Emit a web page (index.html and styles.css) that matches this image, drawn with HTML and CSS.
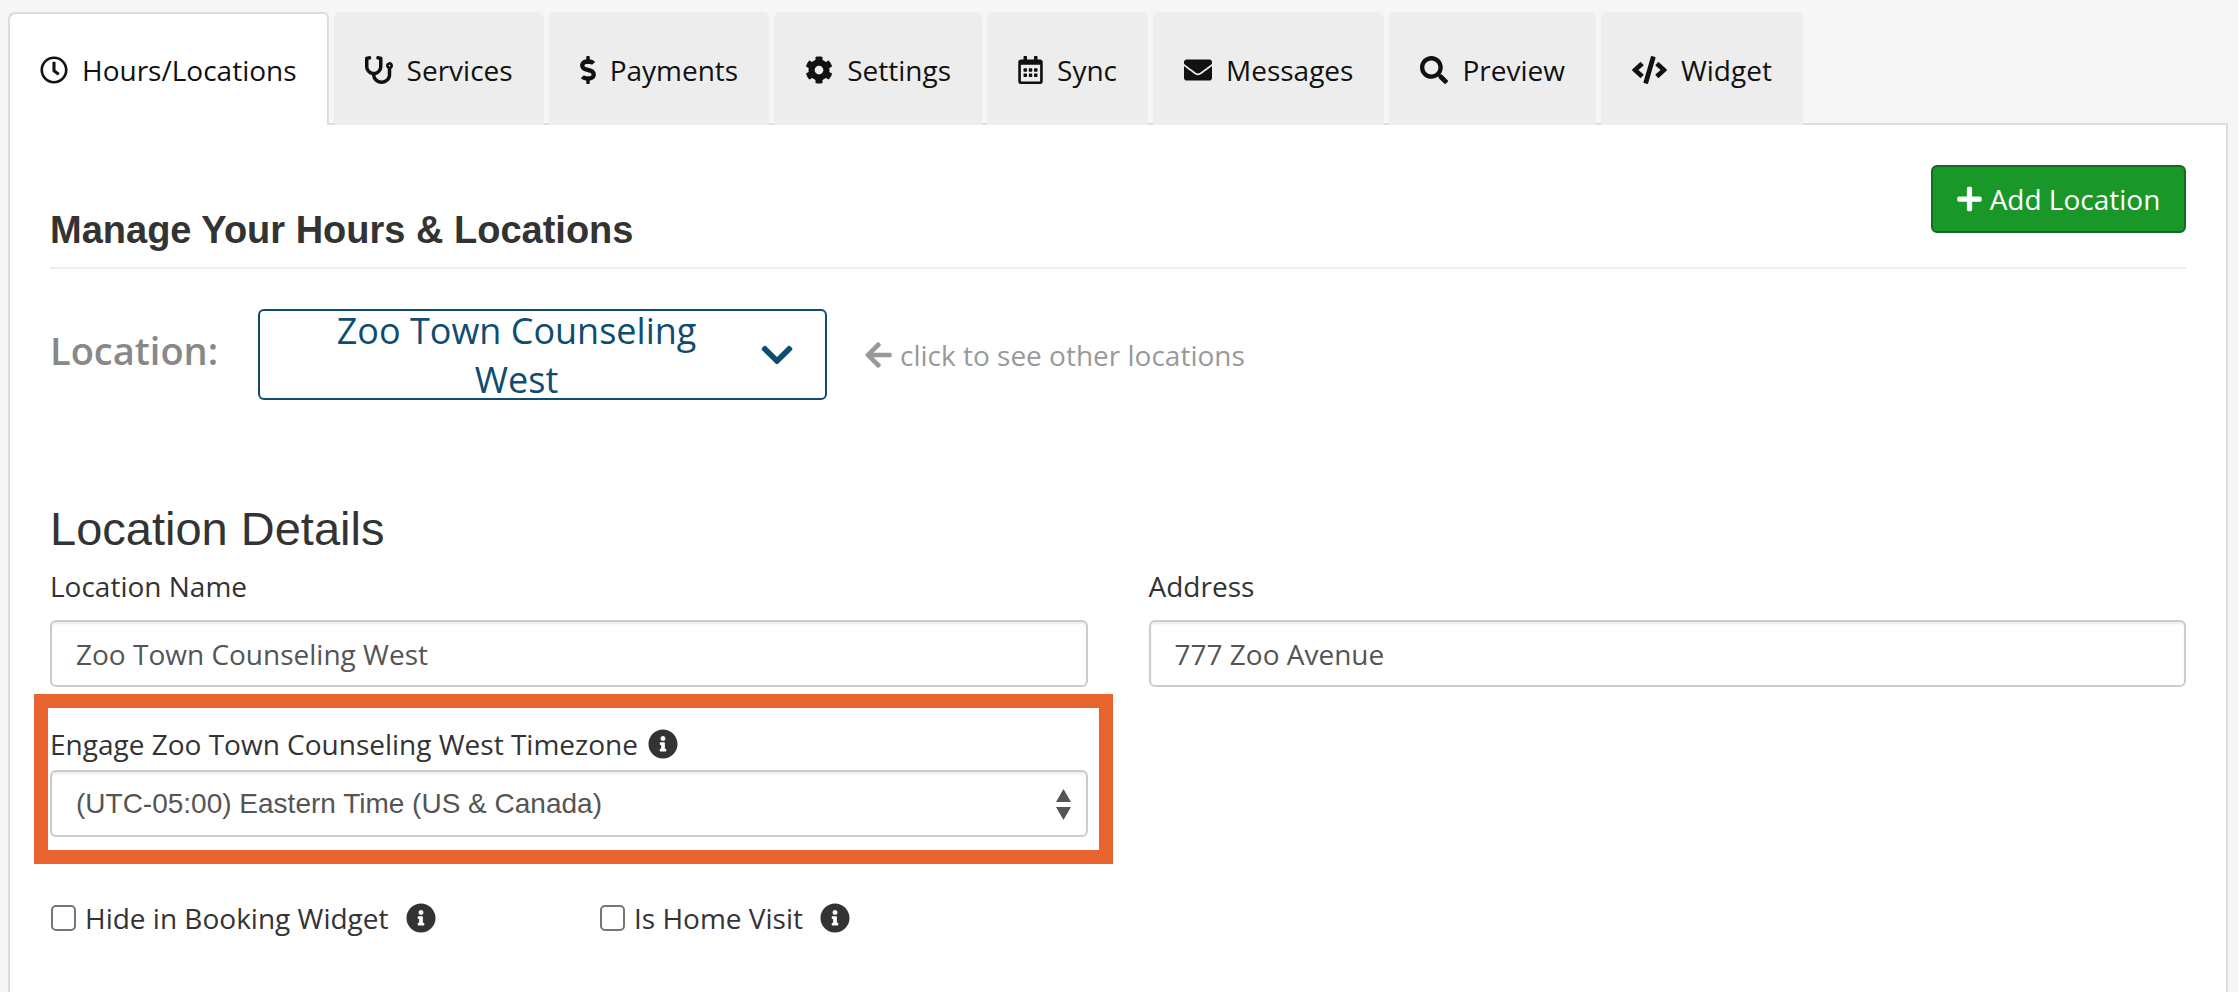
FILE: index.html
```html
<!DOCTYPE html>
<html lang="en">
<head>
<meta charset="utf-8">
<title>Manage Your Hours &amp; Locations</title>
<link rel="stylesheet" href="styles.css">
</head>
<body>
<svg class="defs" width="0" height="0" aria-hidden="true">
  <symbol id="i-clock" viewBox="0 0 512 512"><path d="M256 8C119 8 8 119 8 256s111 248 248 248 248-111 248-248S393 8 256 8zm0 448c-110.500 0-200-89.500-200-200S145.500 56 256 56s200 89.500 200 200-89.500 200-200 200zm61.800-104.400l-84.900-61.700c-3.100-2.300-4.900-5.900-4.900-9.700V116c0-6.600 5.400-12 12-12h32c6.600 0 12 5.400 12 12v141.700l66.800 48.600c5.400 3.900 6.500 11.400 2.600 16.800L334.600 349c-3.900 5.300-11.400 6.500-16.800 2.600z"/></symbol>
  <symbol id="i-steth" viewBox="0 0 512 512"><path d="M447.100 112c-34.200.5-62.300 28.400-63 62.600-.5 24.300 12.500 45.600 32 56.800V344c0 57.300-50.200 104-112 104-60 0-109.200-44.100-111.900-99.200C265 333.800 320 269.200 320 192V36.600c0-11.400-8.100-21.300-19.300-23.500L237.800.5c-13-2.600-25.600 5.800-28.200 18.800L206.400 35c-2.600 13 5.800 25.600 18.800 28.200l30.700 6.100v121.400c0 52.900-42.200 96.700-95.100 97.200-53.400.5-96.900-42.700-96.900-96V69.400l30.700-6.100c13-2.600 21.400-15.200 18.800-28.200l-3.100-15.700C107.700 6.400 95.100-2 82.100.6L19.300 13C8.100 15.300 0 25.100 0 36.600V192c0 77.300 55.100 142 128.100 156.800C130.700 439.200 208.600 512 304 512c97 0 176-75.400 176-168V231.400c19.100-11.100 32-31.700 32-55.400 0-35.700-29.200-64.500-64.900-64zm.9 80c-8.800 0-16-7.200-16-16s7.200-16 16-16 16 7.200 16 16-7.200 16-16 16z"/></symbol>
  <symbol id="i-dollar" viewBox="0 0 288 512"><path d="M209.200 233.400l-108-31.600C88.700 198.200 80 186.500 80 173.500c0-16.300 13.200-29.500 29.500-29.500h66.300c12.200 0 24.200 3.700 34.200 10.500 6.100 4.100 14.300 3.100 19.500-2l34.800-34c7.100-6.900 6.100-18.400-1.800-24.500C238 74.800 207.400 64.100 176 64V16c0-8.800-7.200-16-16-16h-32c-8.800 0-16 7.200-16 16v48h-2.500C45.800 64-5.400 118.700.5 183.600c4.200 46.100 39.400 83.600 83.800 96.600l102.500 30c12.500 3.700 21.200 15.300 21.200 28.300 0 16.300-13.200 29.500-29.500 29.500h-66.300C100 368 88 364.300 78 357.500c-6.100-4.100-14.300-3.100-19.500 2l-34.800 34c-7.100 6.900-6.100 18.400 1.800 24.500 24.500 19.200 55.100 29.900 86.500 30v48c0 8.800 7.200 16 16 16h32c8.800 0 16-7.200 16-16v-48.200c46.600-.9 90.300-28.600 105.700-72.700 21.500-61.600-14.600-124.800-72.500-141.700z"/></symbol>
  <symbol id="i-cog" viewBox="0 0 512 512"><path d="M487.400 315.700l-42.600-24.600c4.300-23.200 4.300-47 0-70.200l42.600-24.600c4.900-2.800 7.100-8.600 5.500-14-11.100-35.600-30-67.800-54.700-94.600-3.800-4.100-10-5.100-14.800-2.300L380.800 110c-17.900-15.400-38.500-27.300-60.800-35.100V25.800c0-5.600-3.900-10.500-9.400-11.700-36.700-8.200-74.300-7.800-109.200 0-5.500 1.200-9.400 6.100-9.400 11.700V75c-22.200 7.900-42.800 19.800-60.800 35.100L88.700 85.500c-4.900-2.800-11-1.900-14.800 2.300-24.700 26.700-43.600 58.900-54.700 94.600-1.700 5.400.6 11.200 5.500 14L67.300 221c-4.300 23.200-4.300 47 0 70.200l-42.600 24.600c-4.900 2.800-7.100 8.600-5.500 14 11.100 35.600 30 67.800 54.700 94.600 3.800 4.100 10 5.100 14.800 2.300l42.600-24.600c17.900 15.400 38.500 27.300 60.800 35.100v49.200c0 5.600 3.900 10.500 9.400 11.700 36.700 8.200 74.300 7.800 109.200 0 5.500-1.200 9.400-6.100 9.400-11.700v-49.200c22.200-7.900 42.800-19.800 60.800-35.100l42.600 24.600c4.900 2.800 11 1.900 14.800-2.300 24.700-26.700 43.600-58.900 54.700-94.600 1.500-5.500-.7-11.300-5.600-14.100zM256 336c-44.100 0-80-35.900-80-80s35.900-80 80-80 80 35.900 80 80-35.900 80-80 80z"/></symbol>
  <symbol id="i-cal" viewBox="0 0 448 512"><path d="M148 288h-40c-6.600 0-12-5.400-12-12v-40c0-6.600 5.400-12 12-12h40c6.600 0 12 5.400 12 12v40c0 6.600-5.400 12-12 12zm108-12v-40c0-6.600-5.400-12-12-12h-40c-6.600 0-12 5.400-12 12v40c0 6.600 5.400 12 12 12h40c6.600 0 12-5.400 12-12zm96 0v-40c0-6.600-5.400-12-12-12h-40c-6.600 0-12 5.400-12 12v40c0 6.600 5.400 12 12 12h40c6.600 0 12-5.400 12-12zm-96 96v-40c0-6.600-5.400-12-12-12h-40c-6.600 0-12 5.400-12 12v40c0 6.600 5.400 12 12 12h40c6.600 0 12-5.400 12-12zm-96 0v-40c0-6.600-5.400-12-12-12h-40c-6.600 0-12 5.400-12 12v40c0 6.600 5.400 12 12 12h40c6.600 0 12-5.400 12-12zm192 0v-40c0-6.600-5.400-12-12-12h-40c-6.600 0-12 5.400-12 12v40c0 6.600 5.400 12 12 12h40c6.600 0 12-5.400 12-12zm96-260v352c0 26.500-21.500 48-48 48H48c-26.500 0-48-21.500-48-48V112c0-26.500 21.500-48 48-48h48V12c0-6.600 5.400-12 12-12h40c6.600 0 12 5.400 12 12v52h128V12c0-6.600 5.400-12 12-12h40c6.600 0 12 5.400 12 12v52h48c26.500 0 48 21.500 48 48zm-48 346V160H48v298c0 3.300 2.700 6 6 6h340c3.300 0 6-2.700 6-6z"/></symbol>
  <symbol id="i-env" viewBox="0 0 512 512"><path d="M502.300 190.800c3.900-3.100 9.700-.2 9.700 4.700V400c0 26.500-21.500 48-48 48H48c-26.500 0-48-21.500-48-48V195.600c0-5 5.700-7.800 9.700-4.700 22.400 17.400 52.100 39.500 154.100 113.600 21.100 15.400 56.700 47.800 92.200 47.600 35.700.3 72-32.800 92.300-47.600 102-74.100 131.600-96.300 154-113.700zM256 320c23.200.4 56.600-29.200 73.400-41.400 132.700-96.300 142.800-104.700 173.400-128.700 5.800-4.500 9.200-11.500 9.200-18.900v-19c0-26.500-21.500-48-48-48H48C21.500 64 0 85.500 0 112v19c0 7.400 3.400 14.300 9.200 18.900 30.600 23.900 40.700 32.400 173.400 128.700 16.800 12.200 50.200 41.800 73.400 41.400z"/></symbol>
  <symbol id="i-search" viewBox="0 0 512 512"><path d="M505 442.700L405.300 343c-4.500-4.500-10.600-7-17-7H372c27.600-35.300 44-79.700 44-128C416 93.100 322.900 0 208 0S0 93.100 0 208s93.100 208 208 208c48.300 0 92.700-16.400 128-44v16.300c0 6.400 2.500 12.500 7 17l99.700 99.700c9.400 9.400 24.600 9.400 33.900 0l28.300-28.300c9.400-9.400 9.400-24.600.1-34zM208 336c-70.700 0-128-57.200-128-128 0-70.700 57.200-128 128-128 70.700 0 128 57.200 128 128 0 70.700-57.200 128-128 128z"/></symbol>
  <symbol id="i-code" viewBox="0 0 640 512"><path d="M278.900 511.500l-61-17.700c-6.400-1.800-10-8.500-8.200-14.900L346.200 8.700c1.800-6.400 8.500-10.100 14.900-8.200l61 17.700c6.400 1.800 10 8.500 8.200 14.900L293.800 503.300c-1.900 6.400-8.500 10.100-14.900 8.200zm-114-112.200l43.500-46.400c4.600-4.900 4.300-12.700-.8-17.200L117 256l90.600-79.700c5.100-4.500 5.500-12.300.8-17.200l-43.500-46.400c-4.500-4.800-12.100-5.100-17-.5L3.800 247.200c-5.100 4.700-5.100 12.800 0 17.500l144.100 135.100c4.900 4.600 12.500 4.400 17-.5zm327.200.6l144.100-135.100c5.100-4.700 5.100-12.800 0-17.500L492.100 112.100c-4.800-4.500-12.400-4.300-17 .5L431.600 159c-4.600 4.900-4.300 12.700.8 17.200L523 256l-90.600 79.700c-5.100 4.500-5.500 12.300-.8 17.200l43.500 46.400c4.500 4.900 12.100 5.100 17 .6z"/></symbol>
  <symbol id="i-plus" viewBox="0 0 448 512"><path d="M416 208H272V64c0-17.670-14.330-32-32-32h-32c-17.670 0-32 14.330-32 32v144H32c-17.670 0-32 14.330-32 32v32c0 17.670 14.330 32 32 32h144v144c0 17.670 14.330 32 32 32h32c17.670 0 32-14.330 32-32V304h144c17.670 0 32-14.330 32-32v-32c0-17.670-14.330-32-32-32z"/></symbol>
  <symbol id="i-chev" viewBox="0 0 448 512"><path d="M207.029 381.476L12.686 187.132c-9.373-9.373-9.373-24.569 0-33.941l22.667-22.667c9.357-9.357 24.522-9.375 33.901-.04L224 284.505l154.745-154.021c9.379-9.335 24.544-9.317 33.901.04l22.667 22.667c9.373 9.373 9.373 24.569 0 33.941L240.971 381.476c-9.373 9.372-24.569 9.372-33.942 0z"/></symbol>
  <symbol id="i-left" viewBox="0 0 448 512"><path d="M257.500 445.100l-22.200 22.200c-9.400 9.400-24.600 9.400-33.900 0L7 273c-9.400-9.400-9.400-24.600 0-33.900L201.400 44.700c9.400-9.400 24.600-9.400 33.900 0l22.200 22.200c9.500 9.500 9.300 25-.4 34.300L136.600 216H424c13.300 0 24 10.700 24 24v32c0 13.300-10.700 24-24 24H136.600l120.500 114.800c9.800 9.300 10 24.800.4 34.300z"/></symbol>
  <symbol id="i-info" viewBox="0 0 512 512"><path d="M256 8C119.043 8 8 119.083 8 256c0 136.997 111.043 248 248 248s248-111.003 248-248C504 119.083 392.957 8 256 8zm0 110c23.196 0 42 18.804 42 42s-18.804 42-42 42-42-18.804-42-42 18.804-42 42-42zm56 254c0 6.627-5.373 12-12 12h-88c-6.627 0-12-5.373-12-12v-24c0-6.627 5.373-12 12-12h12v-64h-12c-6.627 0-12-5.373-12-12v-24c0-6.627 5.373-12 12-12h64c6.627 0 12 5.373 12 12v100h12c6.627 0 12 5.373 12 12v24z"/></symbol>
</svg>

<nav class="tabs">
  <a class="tab tab-active"><svg class="tab-icon icon-round"><use href="#i-clock"/></svg>Hours/Locations</a>
  <a class="tab"><svg class="tab-icon icon-round"><use href="#i-steth"/></svg>Services</a>
  <a class="tab"><svg class="tab-icon icon-dollar"><use href="#i-dollar"/></svg>Payments</a>
  <a class="tab"><svg class="tab-icon icon-round"><use href="#i-cog"/></svg>Settings</a>
  <a class="tab"><svg class="tab-icon icon-cal"><use href="#i-cal"/></svg>Sync</a>
  <a class="tab"><svg class="tab-icon icon-round"><use href="#i-env"/></svg>Messages</a>
  <a class="tab"><svg class="tab-icon icon-round"><use href="#i-search"/></svg>Preview</a>
  <a class="tab"><svg class="tab-icon icon-code"><use href="#i-code"/></svg>Widget</a>
</nav>

<main class="panel">
  <header class="page-header">
    <h1 class="page-title">Manage Your Hours &amp; Locations</h1>
    <button class="btn-add" type="button"><svg class="btn-plus"><use href="#i-plus"/></svg>Add Location</button>
  </header>

  <div class="location-row">
    <span class="location-label">Location:</span>
    <button class="location-picker" type="button">Zoo Town Counseling West<svg class="picker-chevron"><use href="#i-chev"/></svg></button>
    <span class="location-hint"><svg class="hint-arrow"><use href="#i-left"/></svg>click to see other locations</span>
  </div>

  <h2 class="section-title">Location Details</h2>

  <div class="form-grid">
    <div class="form-col">
      <label class="field-label">Location Name</label>
      <input class="field-control" type="text" value="Zoo Town Counseling West">
      <div class="highlight">
        <label class="field-label field-label-tz">Engage Zoo Town Counseling West Timezone<svg class="info info-tz"><use href="#i-info"/></svg></label>
        <div class="select-wrap">
          <select class="field-control field-select"><option>(UTC-05:00) Eastern Time (US &amp; Canada)</option></select>
          <svg class="select-arrows" viewBox="0 0 15 31"><path d="M7.500 0L15 13H0z"/><path d="M0 18h15L7.500 31z"/></svg>
        </div>
      </div>
      <div class="check-row">
        <label class="check check-hide"><input class="check-box" type="checkbox">Hide in Booking Widget<svg class="info info-check"><use href="#i-info"/></svg></label>
        <label class="check"><input class="check-box" type="checkbox">Is Home Visit<svg class="info info-check"><use href="#i-info"/></svg></label>
      </div>
    </div>
    <div class="form-col">
      <label class="field-label">Address</label>
      <input class="field-control" type="text" value="777 Zoo Avenue">
    </div>
  </div>
</main>
</body>
</html>
```
FILE: styles.css
```css
* { box-sizing: border-box; }

html, body { height: 100%; }

body {
  margin: 0;
  display: flex;
  flex-direction: column;
  min-height: 100vh;
  overflow: hidden;
  background: #f6f6f6;
  color: #333;
  font-family: "Open Sans", sans-serif;
}

.defs { position: absolute; }

svg { fill: currentColor; display: block; flex: none; }

/* Tabs */
.tabs {
  display: flex;
  gap: 5px;
  padding: 12px 0 0 8px;
  margin-bottom: -2px;
  position: relative;
  z-index: 1;
}

.tab {
  display: flex;
  align-items: center;
  height: 113px;
  padding: 3px 31px 0;
  background: #ededed;
  border-radius: 6px 6px 0 0;
  color: #111;
  font-size: 28px;
  white-space: nowrap;
}

.tab-active {
  background: #fff;
  box-shadow: inset 2px 2px 0 #ddd, inset -2px 0 0 #ddd;
  padding: 3px 32px 0;
}

.tab-icon { height: 28px; margin-right: 14px; }
.icon-round { width: 28px; }
.icon-dollar { width: 16px; }
.icon-cal { width: 25px; }
.icon-code { width: 35px; }

/* Panel */
.panel {
  flex: 1;
  margin: 0 10px 0 8px;
  padding: 40px 40px 0;
  background: #fff;
  border: 2px solid #ddd;
  border-bottom: 0;
}

.page-header {
  display: flex;
  justify-content: space-between;
  align-items: flex-end;
  height: 104px;
  border-bottom: 2px solid #eee;
}

.page-title {
  margin: 0 0 15px;
  font: bold 38px/44px "Liberation Sans", Arial, sans-serif;
  color: #333;
}

.btn-add {
  display: flex;
  align-items: center;
  justify-content: center;
  align-self: flex-start;
  width: 255px;
  height: 68px;
  padding: 0;
  background: #1a9729;
  border: 2px solid #146c22;
  border-radius: 6px;
  color: #fff;
  font: 28px "Open Sans", sans-serif;
}

.btn-plus { width: 25px; height: 28px; margin-right: 8px; }

/* Location picker row */
.location-row {
  display: flex;
  align-items: center;
  margin-top: 40px;
}

.location-label {
  width: 208px;
  margin-top: -10px;
  color: #888;
  font-size: 38px;
  font-weight: 600;
}

.location-picker {
  display: flex;
  align-items: center;
  width: 569px;
  height: 91px;
  padding: 0 32px;
  background: #fff;
  border: 2px solid #0f4d70;
  border-radius: 6px;
  color: #0f4d70;
  font: 36px "Open Sans", sans-serif;
}

.picker-chevron { width: 32px; height: 36px; margin-left: 20px; }

.location-hint {
  display: flex;
  align-items: center;
  margin-left: 38px;
  color: #999;
  font-size: 28px;
}

.hint-arrow { width: 27px; height: 30px; margin-right: 8px; }

/* Details form */
.section-title {
  margin: 102px 0 0;
  font: 47px/54px "Liberation Sans", Arial, sans-serif;
  color: #333;
}

.form-grid {
  display: grid;
  grid-template-columns: 1fr 1fr;
  gap: 61px;
  margin-top: 11px;
}

.field-label {
  display: flex;
  align-items: center;
  height: 38px;
  margin-bottom: 15px;
  font-size: 28px;
  color: #333;
}

.field-control {
  display: block;
  width: 100%;
  height: 67px;
  padding: 0 24px;
  background: #fff;
  border: 2px solid #ccc;
  border-radius: 6px;
  box-shadow: inset 0 2px 2px rgba(0, 0, 0, .075);
  color: #555;
  font: 28px "Open Sans", sans-serif;
}

.highlight {
  margin: 7px -25px 0 -16px;
  padding: 0 11px 13px 16px;
  border: 14px solid #e8642f;
  border-left-width: 0;
  outline: 0;
  box-shadow: none;
}

.highlight {
  border-left-width: 14px;
  padding-left: 2px;
}

.field-label-tz { margin: 16px 0 7px; height: 39px; }

.info-tz { margin-left: 10px; }

.info { width: 30px; height: 30px; color: #333; }

.select-wrap { position: relative; }

.field-select {
  appearance: none;
  -webkit-appearance: none;
  font-family: "Liberation Sans", Arial, sans-serif;
  font-size: 28px;
}

.select-arrows {
  position: absolute;
  top: 19px;
  right: 17px;
  width: 15px;
  height: 31px;
  color: #555;
  pointer-events: none;
}

.check-row {
  display: flex;
  margin-top: 38px;
}

.check {
  display: flex;
  align-items: center;
  height: 32px;
  font-size: 28px;
  color: #333;
}

.check-hide { width: 549px; }

.check-box {
  appearance: none;
  -webkit-appearance: none;
  width: 25px;
  height: 26px;
  margin: 0 9px 0 1px;
  background: #fff;
  border: 2px solid #767676;
  border-radius: 5px;
}

.info-check { margin-left: 17px; }
```
